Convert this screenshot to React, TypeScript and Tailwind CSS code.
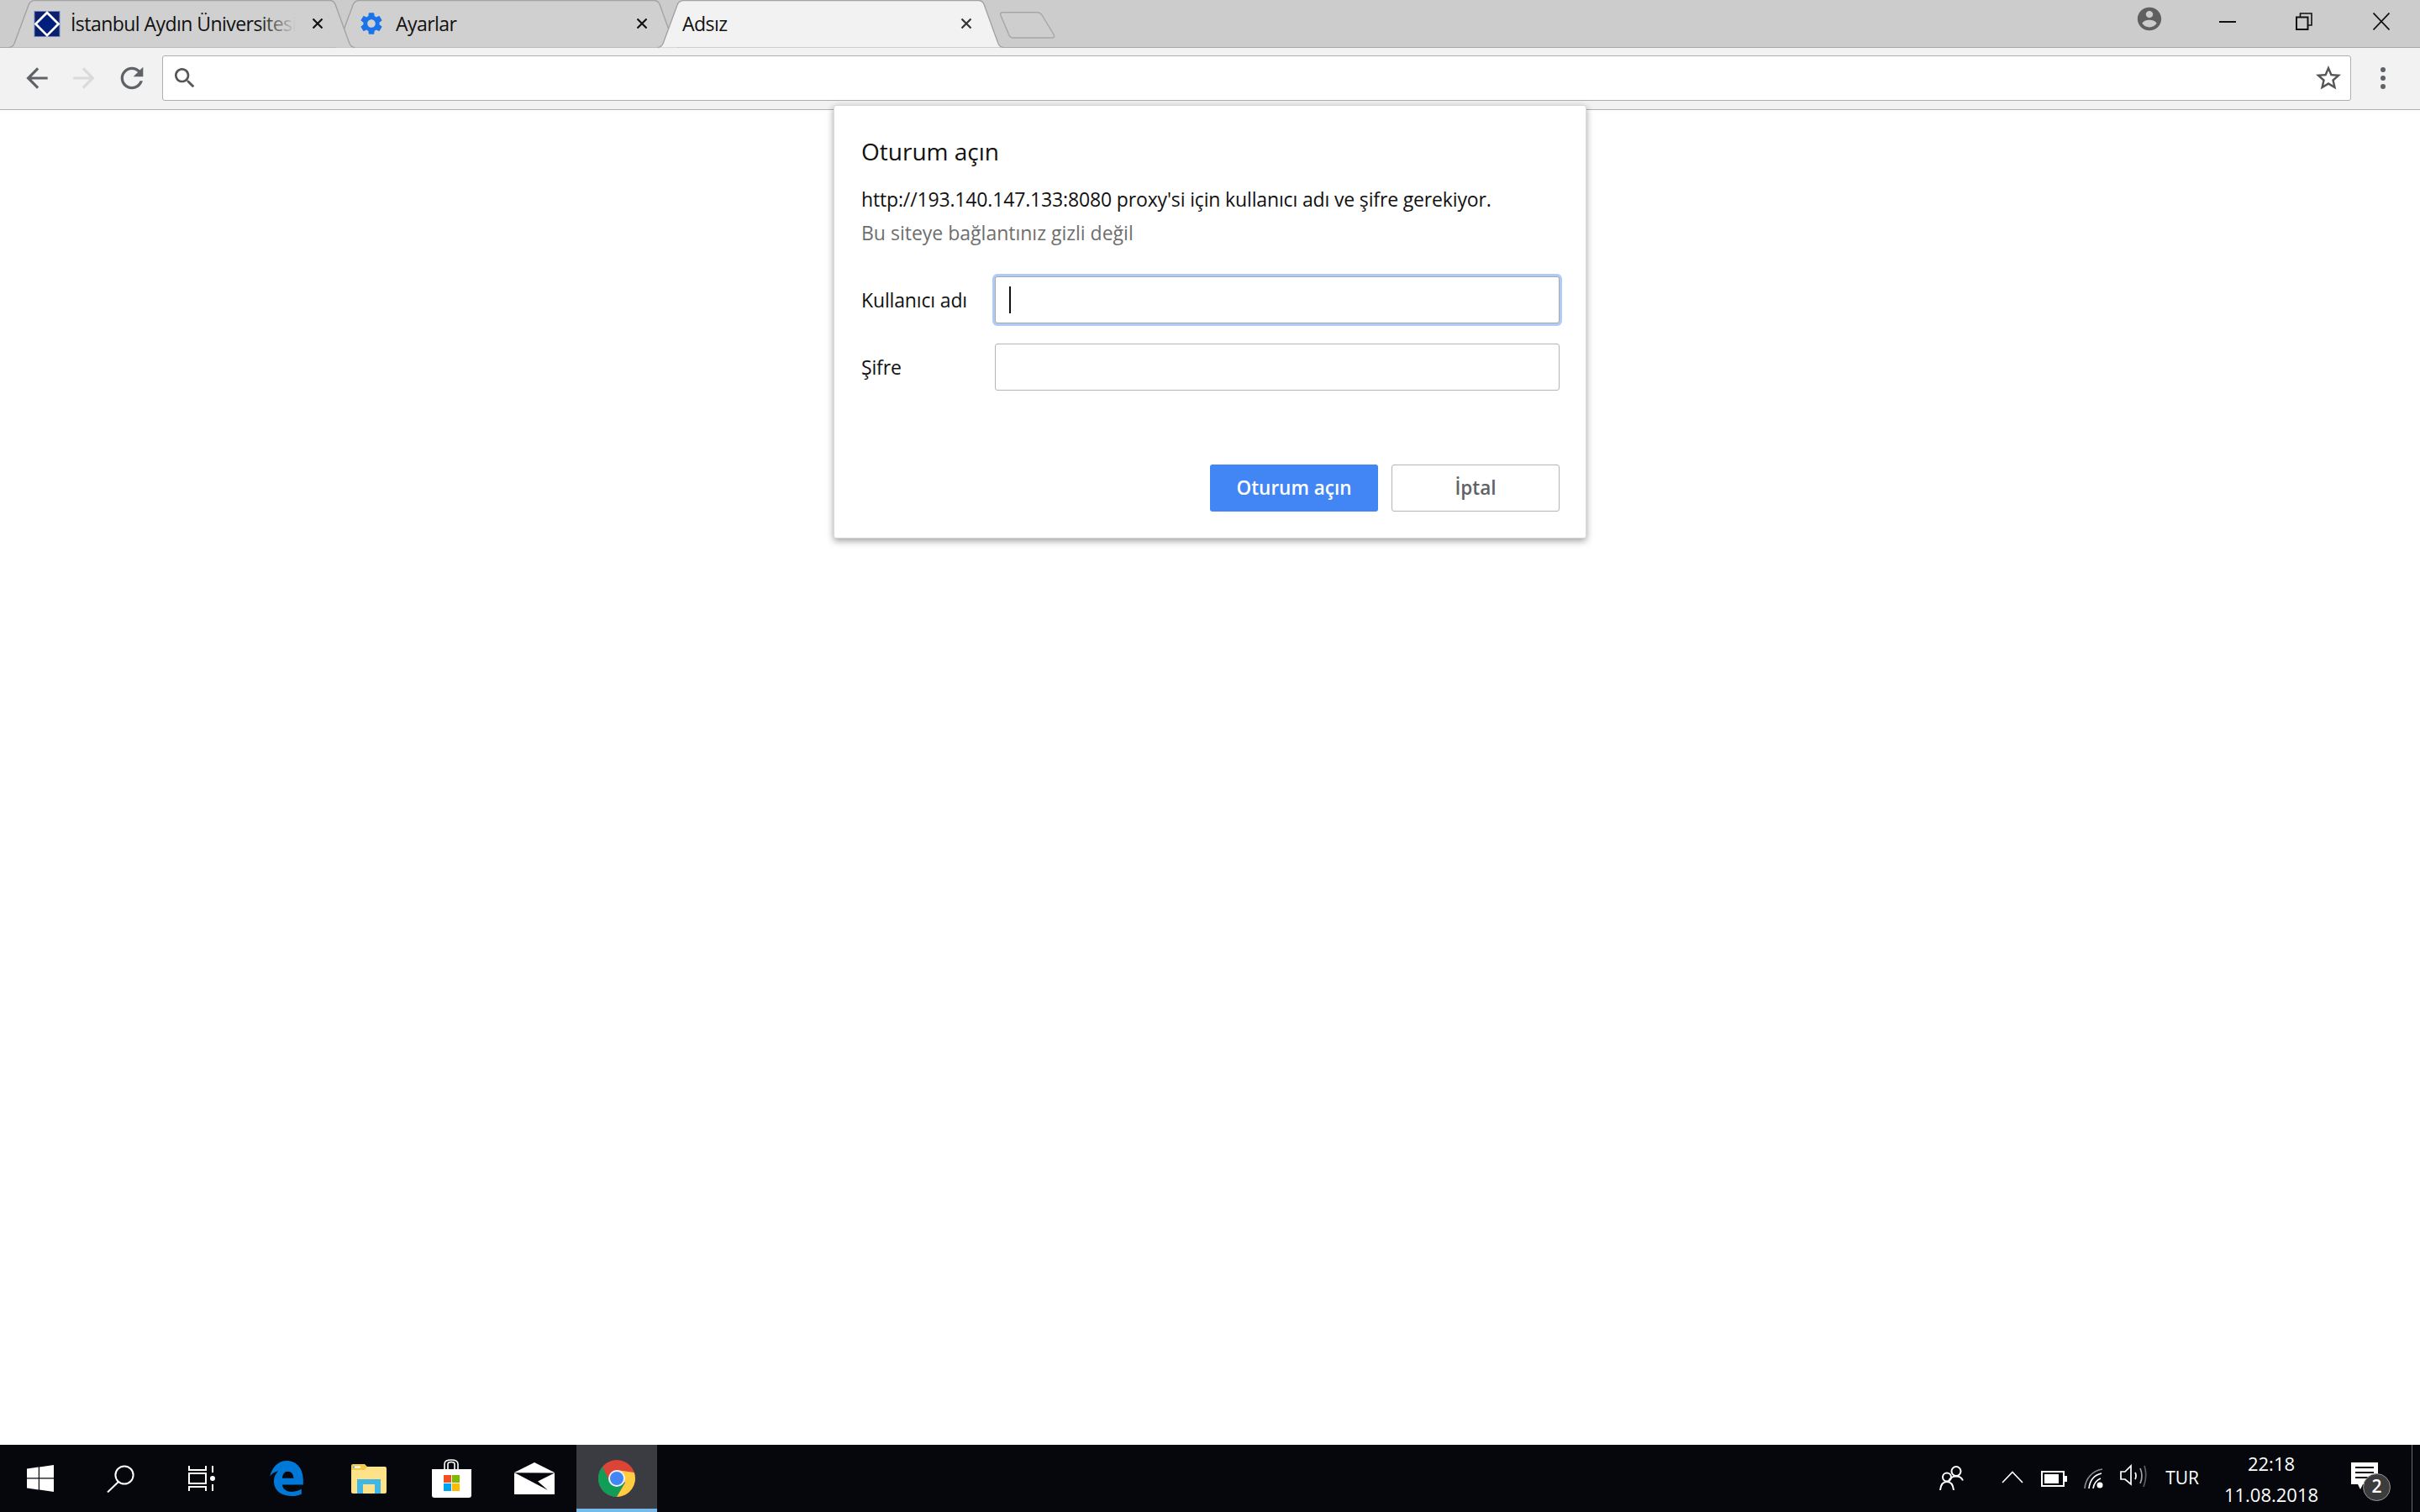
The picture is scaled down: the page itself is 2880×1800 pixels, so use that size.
import React from "react";

const FONT = "font-['Open_Sans','Noto_Sans',sans-serif]";

function TabShape({ fill }: { fill: string }) {
  const d = "M0 56.5 Q4 56 6 52 L23 6 Q25 .5 31 .5 L381 .5 Q386 .5 388 5 L405 52 Q407 56 411 56.5";
  return (
    <svg className="absolute left-0 top-0 overflow-visible" width="411" height="57" viewBox="0 0 411 57">
      <path d={d + " Z"} fill={fill} stroke="none" />
      <path d={d} fill="none" stroke="#a3a3a3" strokeWidth="1.4" />
    </svg>
  );
}

function TabClose({ color }: { color: string }) {
  return (
    <svg width="14" height="14" viewBox="0 0 14 14" className="shrink-0">
      <path d="M1.5 1.5 L12.5 12.5 M12.5 1.5 L1.5 12.5" stroke={color} strokeWidth="2.2" />
    </svg>
  );
}

function Favicon() {
  return (
    <svg width="32" height="31" viewBox="0 0 32 32" className="shrink-0">
      <rect width="32" height="32" fill="#7585c0" />
      <rect x="1" y="1" width="30" height="30" fill="#0b1f6b" />
      <path d="M16 0 L32 16 L16 32 L0 16 Z" fill="#ffffff" />
      <path d="M16 4 L28 16 L16 28 L4 16 Z" fill="#001f7d" />
    </svg>
  );
}

function MIcon({ d, w, h, color }: { d: string; w: number; h: number; color: string }) {
  return (
    <svg width={w} height={h} viewBox="0 0 24 24" preserveAspectRatio="none" className="shrink-0">
      <path d={d} fill={color} />
    </svg>
  );
}

const ARROW = "M20 11H7.83l5.59-5.59L12 4l-8 8 8 8 1.41-1.41L7.83 13H20v-2z";
const RELOAD = "M17.65 6.35C16.2 4.9 14.21 4 12 4c-4.42 0-7.99 3.58-7.99 8s3.57 8 7.99 8c3.73 0 6.84-2.55 7.73-6h-2.08c-.82 2.33-3.04 4-5.65 4-3.31 0-6-2.69-6-6s2.69-6 6-6c1.66 0 3.14.69 4.22 1.78L13 11h7V4l-2.35 2.35z";
const SEARCH = "M15.5 14h-.79l-.28-.27C15.41 12.59 16 11.11 16 9.5 16 5.91 13.09 3 9.5 3S3 5.91 3 9.5 5.91 16 9.5 16c1.61 0 3.09-.59 4.23-1.57l.27.28v.79l5 4.99L20.49 19l-4.99-5zm-6 0C7.01 14 5 11.99 5 9.5S7.01 5 9.5 5 14 7.01 14 9.5 11.99 14 9.5 14z";
const STAR = "M22 9.24l-7.19-.62L12 2 9.19 8.63 2 9.24l5.46 4.73L5.82 21 12 17.27 18.18 21l-1.63-7.03L22 9.24zM12 15.4l-3.76 2.27 1-4.28-3.32-2.88 4.38-.38L12 6.1l1.71 4.04 4.38.38-3.32 2.88 1 4.28L12 15.4z";
const AVATAR = "M12 2C6.48 2 2 6.48 2 12s4.48 10 10 10 10-4.48 10-10S17.52 2 12 2zm0 3c1.66 0 3 1.34 3 3s-1.34 3-3 3-3-1.34-3-3 1.34-3 3-3zm0 14.2c-2.5 0-4.71-1.28-6-3.22.03-1.99 4-3.08 6-3.08 1.99 0 5.97 1.09 6 3.08-1.29 1.94-3.5 3.22-6 3.22z";
const GEAR = "M19.14 12.94c.04-.3.06-.61.06-.94 0-.32-.02-.64-.07-.94l2.03-1.58c.18-.14.23-.41.12-.61l-1.92-3.32c-.12-.22-.37-.29-.59-.22l-2.39.96c-.5-.38-1.03-.7-1.62-.94l-.36-2.54c-.04-.24-.24-.41-.48-.41h-3.84c-.24 0-.43.17-.47.41l-.36 2.54c-.59.24-1.13.57-1.62.94l-2.39-.96c-.22-.08-.47 0-.59.22L2.74 8.87c-.12.21-.08.47.12.61l2.03 1.58c-.05.3-.09.63-.09.94s.02.64.07.94l-2.03 1.58c-.18.14-.23.41-.12.61l1.92 3.32c.12.22.37.29.59.22l2.39-.96c.5.38 1.03.7 1.62.94l.36 2.54c.05.24.24.41.48.41h3.84c.24 0 .44-.17.47-.41l.36-2.54c.59-.24 1.13-.56 1.62-.94l2.39.96c.22.08.47 0 .59-.22l1.92-3.32c.12-.22.07-.47-.12-.61l-2.01-1.58zM12 15.6c-1.98 0-3.6-1.62-3.6-3.6s1.62-3.6 3.6-3.6 3.6 1.62 3.6 3.6-1.62 3.6-3.6 3.6z";

function TabStrip() {
  return (
    <div className="relative h-[57px] shrink-0 bg-[#cccccc] border-b border-[#a8a8a8] flex pl-[11px]">
      <div className="relative z-20 w-[411px] h-[57px]">
        <TabShape fill="#d0d0d0" />
        <div className="relative flex items-center h-[56px] pl-[29px]">
          <Favicon />
          <div className="relative ml-[12px] w-[268px] overflow-hidden whitespace-nowrap text-[23px] tracking-[-0.55px] text-[#111111]">
            İstanbul Aydın Üniversitesi
            <div className="absolute right-0 top-0 bottom-0 w-[44px] bg-gradient-to-r from-transparent to-[#d0d0d0]" />
          </div>
          <div className="ml-[19px]"><TabClose color="#111111" /></div>
        </div>
      </div>
      <div className="relative z-10 -ml-[25px] w-[411px] h-[57px]">
        <TabShape fill="#d0d0d0" />
        <div className="relative flex items-center h-[56px] pl-[29px]">
          <MIcon d={GEAR} w={32} h={32} color="#1a73e8" />
          <div className="ml-[13px] w-[286px] whitespace-nowrap text-[23px] tracking-[-0.55px] text-[#111111]">Ayarlar</div>
          <TabClose color="#111111" />
        </div>
      </div>
      <div className="relative z-30 -ml-[25px] w-[411px] h-[57px]">
        <TabShape fill="#f2f2f2" />
        <div className="relative flex items-center h-[56px] pl-[29px]">
          <div className="w-[331px] whitespace-nowrap text-[23px] tracking-[-0.55px] text-[#111111]">Adsız</div>
          <TabClose color="#333333" />
        </div>
      </div>
      <div className="relative z-0 -ml-[4px] mt-[14px]">
        <svg width="66" height="32" viewBox="0 0 66 32" className="overflow-visible">
          <path d="M3 .8 L44 .8 Q48 .8 50 4 L64 27 Q66 31 62 31 L16 31 Q12 31 11 28 L.8 4 Q0 .8 3 .8 Z" fill="#cecece" stroke="#a6a6a6" strokeWidth="1.4" />
        </svg>
      </div>
      <div className="ml-auto flex items-start h-[56px]">
        <div className="mt-[6px] mr-[66px]">
          <MIcon d={AVATAR} w={34} h={33} color="#5f5f5f" />
        </div>
        <div className="mt-[25px] mr-[71px] w-[20px] h-[2px] bg-[#111111]" />
        <svg width="20" height="21" viewBox="0 0 20 21" className="mt-[15px] mr-[72px]">
          <path d="M5.5 5 V1 H19 V15 H14.5" fill="none" stroke="#111111" strokeWidth="1.6" />
          <rect x="1" y="5.5" width="13.5" height="14.5" fill="none" stroke="#111111" strokeWidth="2" />
        </svg>
        <svg width="20" height="21" viewBox="0 0 20 21" className="mt-[15px] mr-[36px]">
          <path d="M.5 .5 L19.5 20.5 M19.5 .5 L.5 20.5" stroke="#111111" strokeWidth="1.7" />
        </svg>
      </div>
    </div>
  );
}

function Toolbar() {
  return (
    <div className="h-[74px] shrink-0 bg-[#f2f2f2] border-b border-[#b0b0b0] flex items-center pl-[25px] pb-[2px]">
      <MIcon d={ARROW} w={38} h={38} color="#5f6368" />
      <div className="ml-[18px] -scale-x-100">
        <MIcon d={ARROW} w={38} h={38} color="#dadada" />
      </div>
      <div className="ml-[18px]">
        <MIcon d={RELOAD} w={40} h={40} color="#5f6368" />
      </div>
      <div className="ml-[16px] w-[2605px] h-[54px] bg-white border border-[#aeaeae] rounded-[3px] flex items-center pl-[10px] pr-[8px] justify-between">
        <MIcon d={SEARCH} w={32} h={32} color="#555555" />
        <MIcon d={STAR} w={36} h={36} color="#555555" />
      </div>
      <div className="ml-[35px] flex flex-col gap-[4px]">
        <div className="w-[6px] h-[6px] rounded-full bg-[#5f6368]" />
        <div className="w-[6px] h-[6px] rounded-full bg-[#5f6368]" />
        <div className="w-[6px] h-[6px] rounded-full bg-[#5f6368]" />
      </div>
    </div>
  );
}

function Dialog() {
  return (
    <div className="absolute left-[992px] top-[125px] w-[896px] h-[516px] bg-white rounded-[3px] border border-[#d9d9d9] shadow-[0_3px_8px_rgba(0,0,0,0.38)] pl-[32px] pr-[31px] pt-[32px] text-[#111111]">
      <div className="text-[28px] leading-[44px]">Oturum açın</div>
      <div className="mt-[19px] text-[23px] leading-[32px] tracking-[-0.15px]">http://193.140.147.133:8080 proxy'si için kullanıcı adı ve şifre gerekiyor.</div>
      <div className="mt-[8px] text-[23px] leading-[32px] text-[#6e6e6e]">Bu siteye bağlantınız gizli değil</div>
      <div className="mt-[36px] flex items-center h-[56px]">
        <div className="w-[159px] text-[23px] tracking-[-0.15px]">Kullanıcı adı</div>
        <div className="w-[672px] h-[56px] bg-white border border-[#a9a9a9] rounded-[3px] shadow-[0_0_0_3px_#b0cbf6] flex items-center pl-[16px]">
          <div className="w-[2px] h-[32px] bg-[#111111]" />
        </div>
      </div>
      <div className="mt-[24px] flex items-center h-[56px]">
        <div className="w-[159px] text-[23px] tracking-[-0.15px]">Şifre</div>
        <div className="w-[672px] h-[56px] bg-white border border-[#b5b5b5] rounded-[3px]" />
      </div>
      <div className="mt-[88px] flex justify-end gap-[16px]">
        <div className="w-[200px] h-[56px] rounded-[3px] bg-[#4285f4] text-white font-semibold text-[22.5px] flex items-center justify-center">Oturum açın</div>
        <div className="w-[200px] h-[56px] rounded-[3px] bg-white border border-[#b5b5b5] text-[#5f6368] font-semibold text-[22.5px] flex items-center justify-center">İptal</div>
      </div>
    </div>
  );
}

function Slot({ w, children, active }: { w: string; children: React.ReactNode; active?: boolean }) {
  return (
    <div className={`${w} h-[80px] flex items-center justify-center relative ${active ? "bg-[#3a3c42]" : ""}`}>
      {children}
      {active && <div className="absolute left-0 right-0 bottom-0 h-[4px] bg-[#76b9ed]" />}
    </div>
  );
}

function Taskbar() {
  return (
    <div className="h-[80px] shrink-0 bg-[#05070c] flex text-white">
      <Slot w="w-[96px]">
        <svg width="32" height="32" viewBox="0 0 32 32">
          <path d="M0 4.6 L13.8 2.6 V15.2 H0 Z M15 2.4 L32 0 V15.2 H15 Z M0 16.6 H13.8 V29.4 L0 27.4 Z M15 16.6 H32 V32 L15 29.6 Z" fill="#ffffff" />
        </svg>
      </Slot>
      <Slot w="w-[96px]">
        <svg width="34" height="33" viewBox="0 0 34 33">
          <circle cx="21" cy="12" r="10.6" fill="none" stroke="#ffffff" strokeWidth="2" />
          <path d="M14 20 L1 32.5" stroke="#ffffff" strokeWidth="2" />
        </svg>
      </Slot>
      <Slot w="w-[96px]">
        <svg width="33" height="30" viewBox="0 0 33 30" fill="none" stroke="#ffffff" strokeWidth="2">
          <path d="M1 0 V5 H21 V0 M1 30 V25 H21 V30" />
          <rect x="1" y="9" width="20" height="12" />
          <path d="M29 0 V8 M29 22 V30" />
          <circle cx="29" cy="15" r="3" fill="#ffffff" stroke="none" />
        </svg>
      </Slot>
      <div className="w-[4px]" />
      <Slot w="w-[98px]">
        <svg width="40" height="42" viewBox="0 0 118 125">
          <path
            fillRule="evenodd"
            d="M0 55 C8 22 30 0 60 0 C95 0 118 28 118 68 V85 H44 C46 102 60 110 78 110 C90 110 102 106 112 100 V118 C102 123 90 125 78 125 C40 125 14 104 14 72 C14 58 20 46 30 36 C16 40 6 47 0 55 Z M44 62 H84 C84 48 76 38 63 38 C52 38 45 48 44 62 Z"
            fill="#0078d7"
          />
        </svg>
      </Slot>
      <Slot w="w-[98px]">
        <svg width="42" height="35" viewBox="0 0 42 35">
          <path d="M0 5 Q0 3 2 3 H40 Q42 3 42 5 V33 Q42 35 40 35 H2 Q0 35 0 33 Z" fill="#fde28a" />
          <path d="M0 2 Q0 0 2 0 H16 L19 3 L16 7 H0 Z" fill="#f6c84c" />
          <rect x="2" y="2.5" width="9" height="2" fill="#ffffff" />
          <rect x="2" y="2.5" width="2" height="2" fill="#3eb5e8" />
          <path d="M7 35 V18 H35 V35 H28 V24 H14 V35 Z" fill="#3fb6e8" />
        </svg>
      </Slot>
      <Slot w="w-[98px]">
        <svg width="47" height="46" viewBox="0 0 47 46">
          <path d="M15 13 V6 Q15 1 23 1 Q31 1 31 6 V13 M19 13 V6 Q19 3.5 23 3.5 Q27 3.5 27 6 V13" fill="none" stroke="#ffffff" strokeWidth="1.6" />
          <path d="M0 12 H47 V43 Q47 46 44 46 H3 Q0 46 0 43 Z" fill="#ffffff" />
          <rect x="14" y="19" width="9" height="9" fill="#f25022" />
          <rect x="24" y="19" width="9" height="9" fill="#7fba00" />
          <rect x="14" y="29" width="9" height="9" fill="#00a4ef" />
          <rect x="24" y="29" width="9" height="9" fill="#ffb900" />
        </svg>
      </Slot>
      <Slot w="w-[100px]">
        <svg width="48" height="38" viewBox="0 0 48 38">
          <path d="M0 12 L24 0 L48 12 Z" fill="#ffffff" />
          <path d="M0 12.5 H48 V38 H0 Z" fill="#ffffff" />
          <path d="M1 12.5 L47 13 L28 22.5 L40 33 Z" fill="#05070c" />
        </svg>
      </Slot>
      <Slot w="w-[96px]" active>
        <svg width="44" height="44" viewBox="0 0 44 44">
          <circle cx="22" cy="22" r="22" fill="#db4437" />
          <path d="M5 8 L14 27 L32 27 L22 44 A22 22 0 0 1 5 8 Z" fill="#0f9d58" />
          <path d="M22 12 L42.8 15 A22 22 0 0 1 22 44 L32 27 Z" fill="#ffcd40" />
          <circle cx="22" cy="22" r="10" fill="#f1f1f1" />
          <circle cx="22" cy="22" r="8" fill="#4285f4" />
        </svg>
      </Slot>
      <div className="ml-auto flex items-center h-[80px] pr-[9px]">
        <svg width="29" height="31" viewBox="0 0 29 31" fill="none" stroke="#ffffff" strokeWidth="2" className="mb-[2px]">
          <circle cx="20" cy="7.5" r="5.5" />
          <path d="M11 20 Q13 13.5 20 13.5 Q26 13.5 28 18.5" />
          <circle cx="9" cy="14.5" r="5" />
          <path d="M1 30 Q2 20 9 20 Q16 20 17 30" />
        </svg>
        <svg width="26" height="15" viewBox="0 0 26 15" fill="none" stroke="#ffffff" strokeWidth="1.6" className="ml-[45px] mb-[4px]">
          <path d="M1 14 L13 1.5 L25 14" />
        </svg>
        <svg width="31" height="19" viewBox="0 0 31 19" className="ml-[21px]">
          <rect x="1" y="1" width="26" height="17" fill="none" stroke="#ffffff" strokeWidth="2" />
          <rect x="4" y="4" width="17" height="11" fill="#ffffff" />
          <rect x="28" y="6" width="3" height="7" fill="#ffffff" />
        </svg>
        <svg width="25" height="24" viewBox="0 0 25 24" fill="none" stroke="#ffffff" strokeWidth="1.7" className="ml-[20px]">
          <path d="M1 24 C2 12 10 3 22 1" stroke="#8a8a8a" />
          <path d="M6 24 C7 15 12 8 21 6" />
          <path d="M11 24 C12 18 15 14 20 12" />
          <circle cx="19" cy="20" r="3.5" fill="#ffffff" stroke="none" />
        </svg>
        <svg width="32" height="28" viewBox="0 0 32 28" fill="none" stroke="#ffffff" strokeWidth="1.7" className="ml-[18px] mb-[6px]">
          <path d="M1 9 H6 L13 2 V24 L6 18 H1 Z" />
          <path d="M18 10 Q20 14 18 18" />
          <path d="M24 5 Q28 14 24 23" stroke="#a5a5a5" />
          <path d="M29 2 Q33 14 28 27" stroke="#5e5e5e" />
        </svg>
        <div className="ml-[22px] text-[21px]">TUR</div>
        <div className="ml-[28px] w-[116px] flex flex-col items-center text-[22px] leading-[37px] pt-[2px]">
          <div>22:18</div>
          <div>11.08.2018</div>
        </div>
        <div className="relative ml-[37px] w-[32px] h-[27px] mb-[12px]">
          <svg width="32" height="34" viewBox="0 0 32 34">
            <path d="M0 0 H32 V26 H14 L11 32 L8 26 H0 Z" fill="#ffffff" />
            <path d="M5 6 H27 M5 12 H27 M5 18 H20" stroke="#05070c" strokeWidth="2" />
          </svg>
          <div className="absolute left-[14px] top-[13px] w-[33px] h-[33px] rounded-full bg-[#3c3c3c] border border-[#9a9a9a] flex items-center justify-center text-[21px] font-semibold">2</div>
        </div>
        <div className="ml-[40px] w-[1px] h-[80px] bg-[#6a6a6a]" />
      </div>
    </div>
  );
}

export default function App() {
  return (
    <div className={`relative w-[2880px] h-[1800px] overflow-hidden bg-white flex flex-col ${FONT}`}>
      <TabStrip />
      <Toolbar />
      <div className="flex-1 bg-white" />
      <Dialog />
      <Taskbar />
    </div>
  );
}
